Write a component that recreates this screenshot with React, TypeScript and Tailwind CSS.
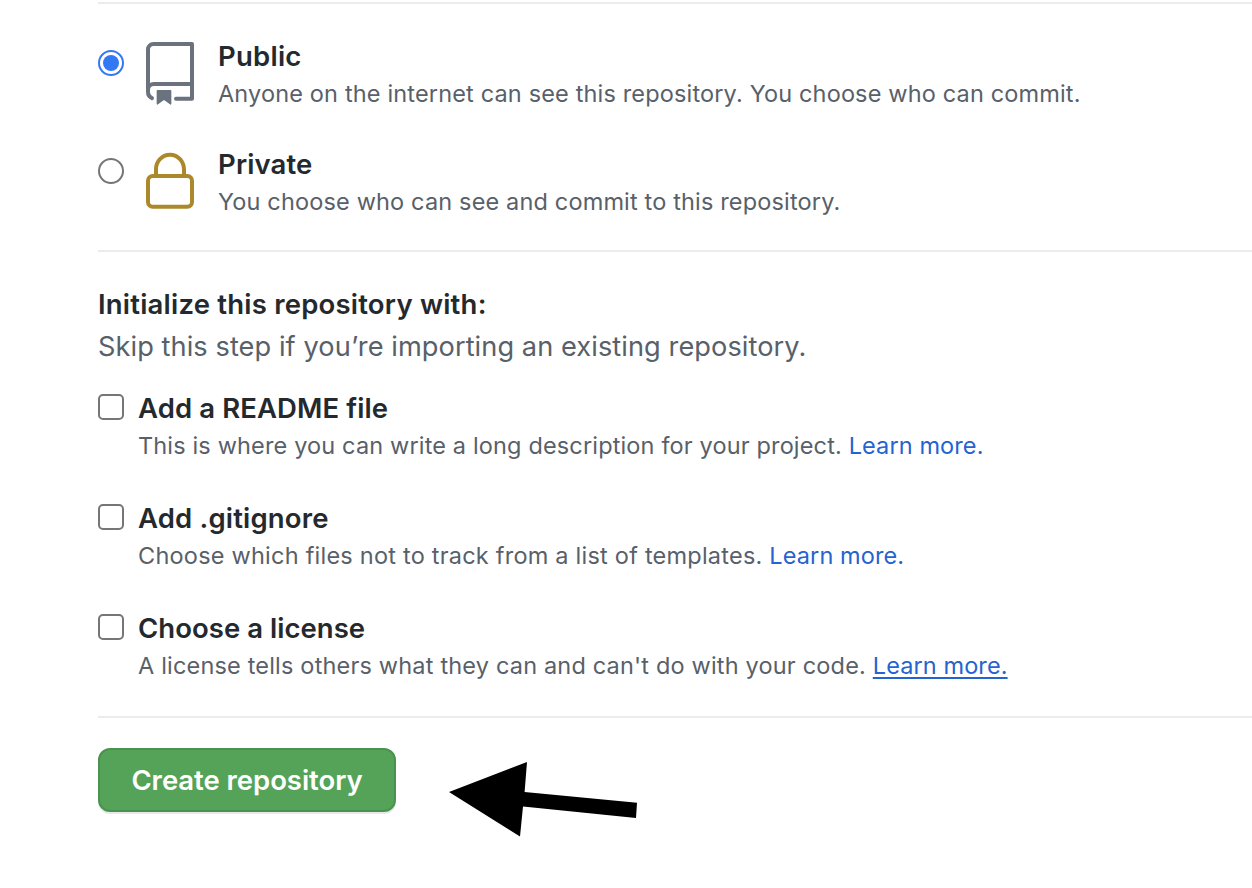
import type { ReactNode } from "react";

function RepoIcon() {
  return (
    <svg viewBox="0 0 24 24" className="block size-16 fill-[#6a737d]" aria-hidden="true">
      <path fillRule="evenodd" d="M3 2.75A2.75 2.75 0 015.75 0h14.5a.75.75 0 01.75.75v20.5a.75.75 0 01-.75.75h-6a.75.75 0 010-1.5h5.25v-4H6A1.5 1.5 0 004.5 18v.75c0 .716.43 1.334 1.05 1.605a.75.75 0 01-.6 1.374A3.25 3.25 0 013 18.75v-16zM19.5 1.5V15H6c-.546 0-1.059.146-1.5.401V2.75c0-.69.56-1.25 1.25-1.25H19.5z" />
      <path d="M7 18.25a.25.25 0 01.25-.25h5a.25.25 0 01.25.25v5.01a.25.25 0 01-.397.201l-2.206-1.604a.25.25 0 00-.294 0L7.397 23.46a.25.25 0 01-.397-.2v-5.01z" />
    </svg>
  );
}

function LockIcon() {
  return (
    <svg viewBox="0 0 24 24" className="block size-16 fill-[#ab892b]" aria-hidden="true">
      <path fillRule="evenodd" d="M6 9V7.25C6 3.845 8.503 1 12 1s6 2.845 6 6.25V9h.5a2.5 2.5 0 012.5 2.5v8a2.5 2.5 0 01-2.5 2.5h-13A2.5 2.5 0 013 19.5v-8A2.5 2.5 0 015.5 9H6zm1.5-1.75C7.5 4.58 9.422 2.5 12 2.5c2.578 0 4.5 2.08 4.5 4.75V9h-9V7.25zm-3 4.25a1 1 0 011-1h13a1 1 0 011 1v8a1 1 0 01-1 1h-13a1 1 0 01-1-1v-8z" />
    </svg>
  );
}

function Radio({ checked = false }: { checked?: boolean }) {
  return (
    <span
      role="radio"
      aria-checked={checked}
      className={
        "mt-[14px] flex size-[26px] shrink-0 items-center justify-center rounded-full border-2 " +
        (checked ? "border-[#3478f6]" : "border-[#767676]")
      }
    >
      {checked && <span className="size-4 rounded-full bg-[#3478f6]" />}
    </span>
  );
}

type TextProps = { title: string; titleClass: string; textClass: string; children: ReactNode };

function OptionText({ title, titleClass, textClass, children }: TextProps) {
  return (
    <div className="whitespace-nowrap">
      <div className={"flex h-10 items-center pt-[2px] text-[27.5px] font-semibold text-[#24292e] " + titleClass}>
        <span>{title}</span>
      </div>
      <p className={"text-[23.5px] leading-9 text-[#586069] " + textClass}>{children}</p>
    </div>
  );
}

function CheckRow(props: TextProps) {
  return (
    <div className="flex h-[110px] gap-[14px]">
      <span
        role="checkbox"
        aria-checked={false}
        className="mt-[6px] size-[26px] shrink-0 rounded-[5px] border-2 border-[#767676] bg-white"
      />
      <OptionText {...props} />
    </div>
  );
}

export default function App() {
  return (
    <main className="h-[888px] overflow-hidden bg-white pl-[98px] pt-[2px] font-['Inter',sans-serif]">
      <section className="h-[248px] border-t-2 border-[#eaecef] pt-8">
        <div className="flex h-[108px]">
          <Radio checked />
          <div className="ml-[14px] mr-4 mt-[6px]">
            <RepoIcon />
          </div>
          <OptionText title="Public" titleClass="tracking-[0.24px]" textClass="tracking-[0.155px]">
            Anyone on the internet can see this repository. You choose who can commit.
          </OptionText>
        </div>
        <div className="flex">
          <Radio />
          <div className="ml-[14px] mr-4 mt-[6px]">
            <LockIcon />
          </div>
          <OptionText title="Private" titleClass="tracking-[0.14px]" textClass="tracking-[0.155px]">
            You choose who can see and commit to this repository.
          </OptionText>
        </div>
      </section>

      <section className="h-[466px] border-t-2 border-[#eaecef] pt-8">
        <h2 className="h-[42px] whitespace-nowrap text-[27.5px] font-semibold leading-10 tracking-[0.21px] text-[#24292e]">
          <span>Initialize this repository with:</span>
        </h2>
        <p className="mb-[20px] h-[42px] whitespace-nowrap pt-px text-[27.2px] leading-10 tracking-[0.07px] text-[#586069]">
          <span>Skip this step if you’re importing an existing repository.</span>
        </p>
        <CheckRow title="Add a README file" titleClass="tracking-[0.1px]" textClass="tracking-[0.15px]">
          This is where you can write a long description for your project.{" "}
          <a className="tracking-[0.1px] text-[#2563cf]">Learn more.</a>
        </CheckRow>
        <CheckRow title="Add .gitignore" titleClass="tracking-[0.17px]" textClass="tracking-[0.225px]">
          Choose which files not to track from a list of templates.{" "}
          <a className="tracking-[0.1px] text-[#2563cf]">Learn more.</a>
        </CheckRow>
        <CheckRow title="Choose a license" titleClass="tracking-[0.04px]" textClass="tracking-[0.18px]">
          A license tells others what they can and can't do with your code.{" "}
          <a className="tracking-[0.1px] text-[#2563cf] underline decoration-2 underline-offset-[3px]">Learn more.</a>
        </CheckRow>
      </section>

      <section className="flex border-t-2 border-[#eaecef] pt-[30px]">
        <button className="flex h-16 w-[298px] items-center justify-center whitespace-nowrap rounded-xl border-2 border-[#4a934f] bg-[#55a358] pt-[2px] text-[27.5px] font-semibold tracking-[-0.05px] text-white shadow-[0_2px_0_rgba(27,31,35,0.1)]">
          <span>Create repository</span>
        </button>
        <svg viewBox="0 0 190 76" className="ml-[53px] mt-[13px] block h-[76px] w-[190px]" aria-hidden="true">
          <path d="M0 31L78 1L75.6 31L188 41.8L187 57L74 45.5L71 75.5Z" />
        </svg>
      </section>
    </main>
  );
}
